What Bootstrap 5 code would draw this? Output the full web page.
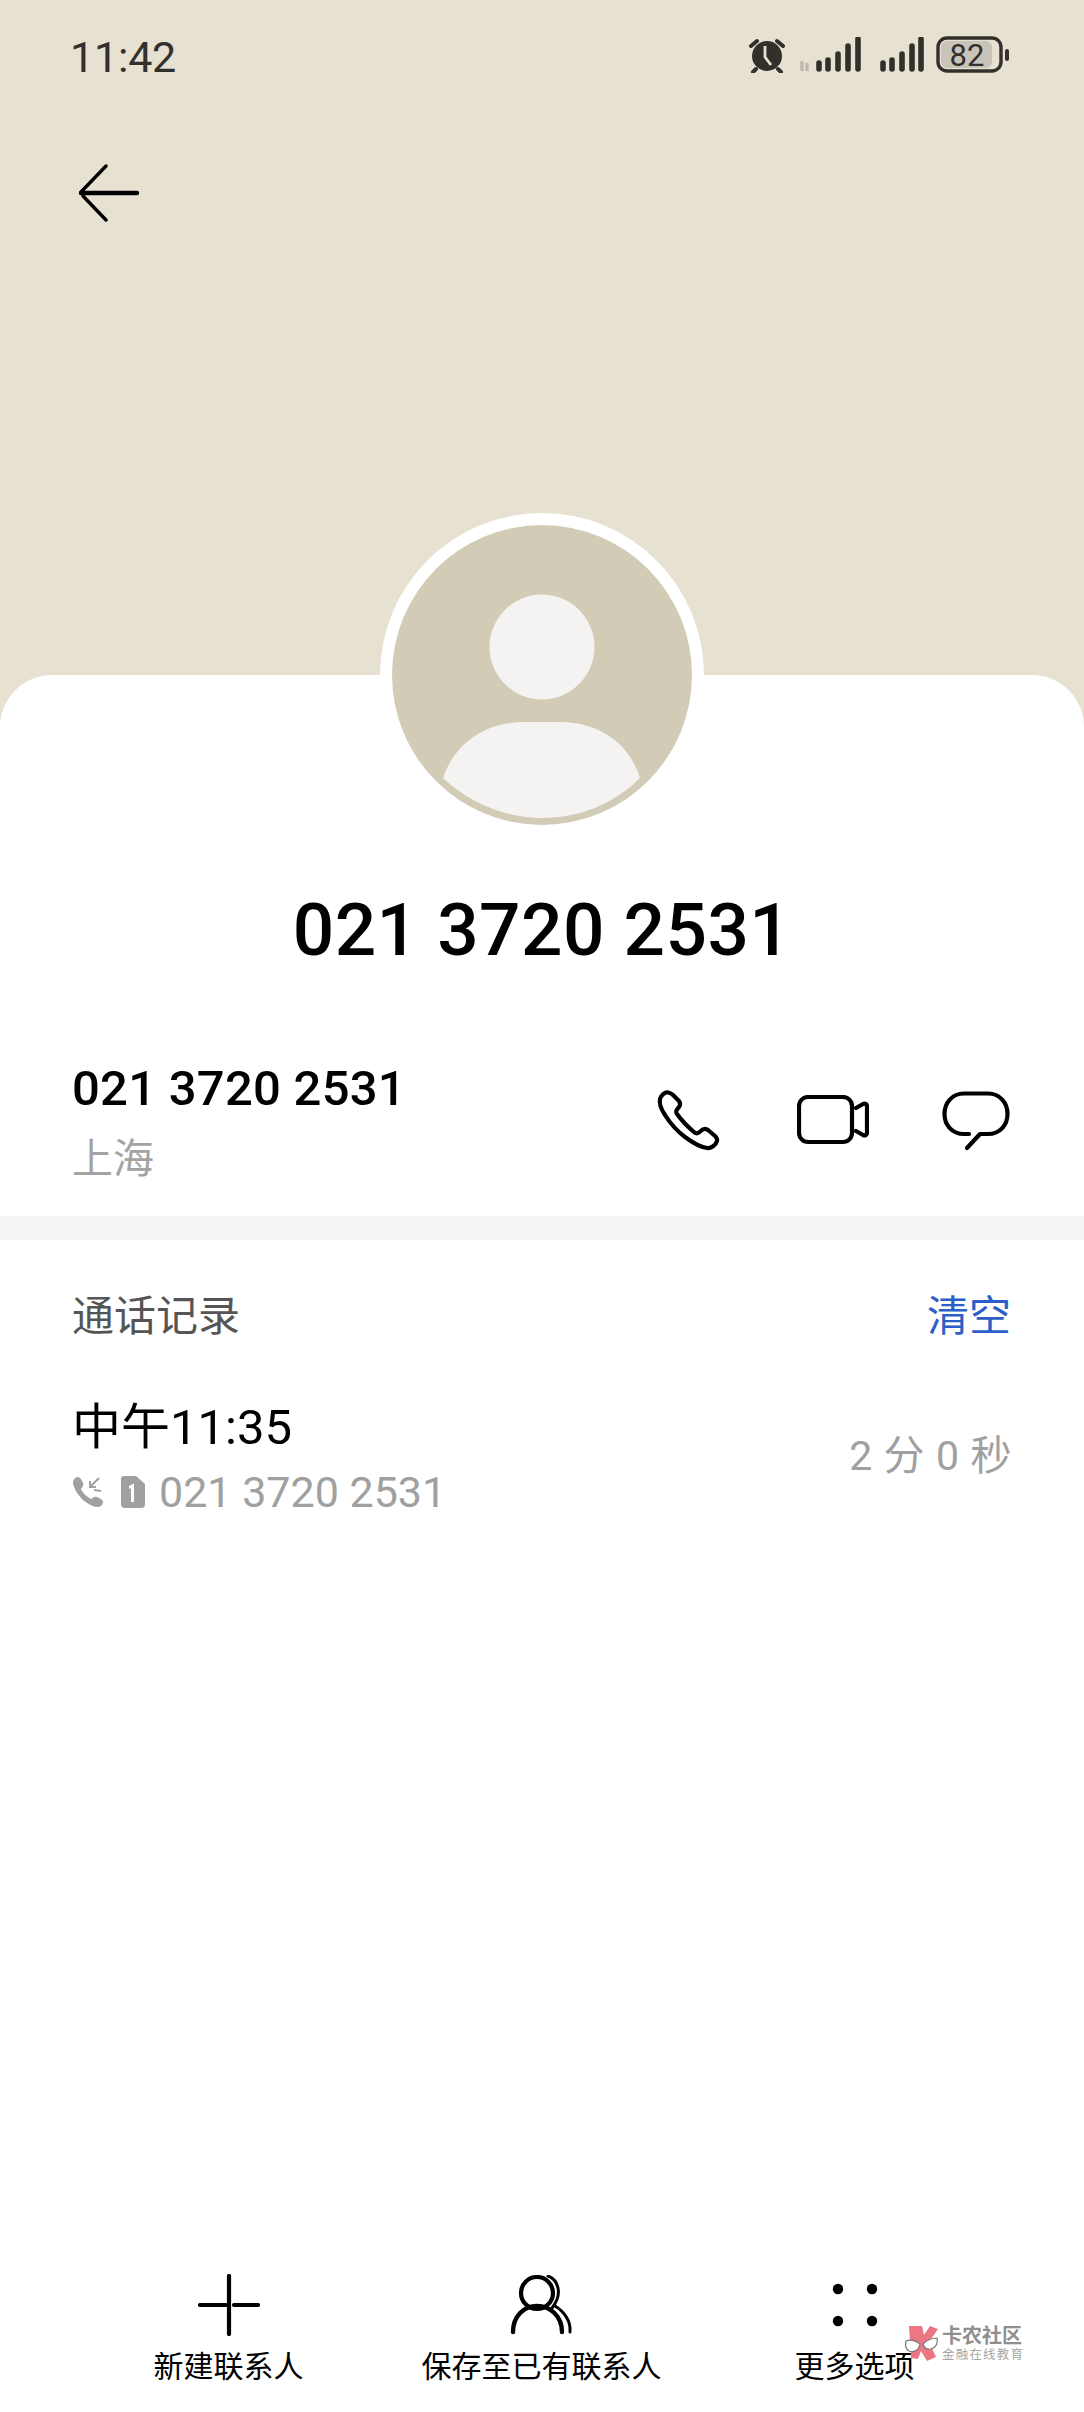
<!DOCTYPE html>
<html lang="zh">
<head>
  <meta charset="UTF-8">
  <title>通话详情</title>
  <link rel="stylesheet" href="https://cdn.jsdelivr.net/npm/bootstrap@5.3.3/dist/css/bootstrap.min.css">
  <style>
    body { background: #fff; font-family: Roboto, "Noto Sans CJK SC", sans-serif; color: #000; }
    svg { display: block; }
    .page { width: 1084px; height: 2412px; background: #e6e1d1; position: relative; overflow: hidden; }
    .top-area { height: 675px; }
    .status-bar { padding: 36px 74px 0 70px; height: 114px; color: #33302b; }
    .clock { font-size: 43px; line-height: 42px; letter-spacing: -.2px; }
    .sig-gap { margin-left: 13px; }
    .back-btn { margin: 50px 0 0 78px; }
    .sheet { background: #fff; border-radius: 52px 52px 0 0; height: 1737px; }
    .avatar-ring { position: absolute; left: 380px; top: 513px; width: 324px; height: 324px; }
    .big-num { padding-top: 214px; font-size: 73px; line-height: 82px; font-weight: 500; letter-spacing: .45px; }
    .num-row { padding: 90px 72px 0; height: 245px; }
    .num-main { font-size: 49px; line-height: 56px; font-weight: 500; letter-spacing: .25px; }
    .num-loc { font-size: 41px; line-height: 56px; color: #a3a3a3; margin-top: 14px; }
    .num-actions { padding-top: 28px; margin-right: 2px; }
    .band { height: 24px; background: #f5f5f5; }
    .log-head { padding: 50px 73px 0 72px; height: 108px; font-size: 42px; line-height: 54px; }
    .log-title { color: #555; }
    .log-clear { color: #2b5fc7; }
    .log-row { padding: 52px 72px 0 72px; }
    .log-time { font-size: 49px; line-height: 56px; }
    .log-sub { font-size: 43px; line-height: 50px; color: #a0a0a0; margin-top: 11px; gap: 14px; }
    .log-len { font-size: 41px; color: #a0a0a0; margin-top: 26px; letter-spacing: .6px; }
    .tool-bar { position: absolute; left: 0; right: 0; top: 2270px; padding: 0 72px; }
    .tool-item { width: 313px; font-size: 30px; line-height: 40px; }
    .tool-icon { height: 70px; margin-bottom: 7px; }
    .wm { position: absolute; left: 903px; top: 2324px; color: #8f8f8f; }
    .wm-a { font-size: 20px; line-height: 24px; font-weight: 700; }
    .wm-b { font-size: 12.5px; line-height: 14px; letter-spacing: 1.2px; color: #a5a5a5; }
  </style>
</head>
<body class="m-0">
<div class="page">
  <div class="top-area">
    <div class="status-bar d-flex justify-content-between align-items-start">
      <div class="clock">11:42</div>
      <div class="d-flex align-items-center">
        <svg width="38" height="36" viewBox="0 0 38 36">
          <circle cx="19" cy="19" r="15" fill="#33302b"/>
          <path d="M3 9 9 4M35 9 29 4M8 32 5 35M30 32 33 35" stroke="#33302b" stroke-width="4" stroke-linecap="round"/>
          <path d="M17 9v11l6 8" fill="none" stroke="#e6e1d1" stroke-width="2.800"/>
        </svg>
        <svg class="sig-gap" width="62" height="36" viewBox="0 0 62 36">
          <path d="M3 34V24M8 34V26" stroke="#bdb9ae" stroke-width="3.400"/>
          <path d="M20 32v-6M29 32V23M39 32V17M49 32V9M59 32V2" stroke="#33302b" stroke-width="5.600" stroke-linecap="round"/>
        </svg>
        <svg style="margin-left:19px" width="44" height="36" viewBox="0 0 44 36">
          <path d="M3 32v-6M12 32V23M22 32V17M32 32V9M41 32V2" stroke="#33302b" stroke-width="5.600" stroke-linecap="round"/>
        </svg>
        <svg style="margin-left:12px" width="74" height="38" viewBox="0 0 74 38">
          <rect x="2" y="2" width="63" height="33" rx="9" fill="none" stroke="#33302b" stroke-width="3.400"/>
          <rect x="5" y="5" width="51" height="27" rx="6" fill="#c8c4ba"/>
          <text x="31" y="30" text-anchor="middle" font-family="Roboto, sans-serif" font-size="31" fill="#33302b">82</text>
          <rect x="69" y="13" width="4" height="12" rx="2" fill="#33302b"/>
        </svg>
      </div>
    </div>
    <div class="back-btn">
      <svg width="62" height="58" viewBox="0 0 62 58">
        <path d="M28 2 3 28" fill="none" stroke="#000" stroke-width="3.400" stroke-linecap="round"/>
        <path d="M28 56 5 32" fill="none" stroke="#000" stroke-width="3.400" stroke-linecap="round"/>
        <path d="M3 29H59" fill="none" stroke="#000" stroke-width="4.400" stroke-linecap="round"/>
      </svg>
    </div>
  </div>

  <div class="sheet">
    <div class="big-num text-center">021 3720 2531</div>

    <div class="num-row d-flex justify-content-between">
      <div>
        <div class="num-main">021 3720 2531</div>
        <div class="num-loc">上海</div>
      </div>
      <div class="num-actions d-flex align-items-start">
        <svg width="64" height="64" viewBox="0 0 64 64" style="margin-right:77px">
          <path d="M12 3.500c-3-.8-7 3-8 6.500-1 5 1 10 5 16 5 8 12 16 20 22 8 6 15 10 22 11 4 .6 9-3 10-7 .5-2 0-3-2-5l-7-6c-2-1.600-4-1.500-6 0l-3 2.500c-1.500 1-3 1-4.500 0C32 38 26 32 21 25c-1-1.500-1-3 0-4.500l2-2.500c1.500-2 1.500-4 0-6l-6-6c-1.500-1.500-3-2-5-2.500z" fill="none" stroke="#000" stroke-width="4.200" stroke-linejoin="round"/>
        </svg>
        <svg width="72" height="50" viewBox="0 0 72 50" style="margin:6px 73px 0 0">
          <rect x="2" y="2" width="53" height="45" rx="9" fill="none" stroke="#000" stroke-width="4.200"/>
          <path d="M59 13 66 9c2-1 4 0 4 2.500v26c0 2.500-2 3.500-4 2.500L59 36" fill="none" stroke="#000" stroke-width="4.200" stroke-linejoin="round" stroke-linecap="round"/>
        </svg>
        <svg width="68" height="60" viewBox="0 0 68 60" style="margin-top:2px">
          <path d="M27 43H22C10 43 2.500 34 2.500 23S10 2.500 22 2.500H46C58 2.500 65.500 12 65.500 23S58 43 46 43H38L25 57" fill="none" stroke="#000" stroke-width="4.200" stroke-linecap="round" stroke-linejoin="round"/>
        </svg>
      </div>
    </div>

    <div class="band"></div>

    <div class="log-head d-flex justify-content-between">
      <span class="log-title">通话记录</span>
      <span class="log-clear">清空</span>
    </div>

    <div class="log-row d-flex justify-content-between align-items-start">
      <div>
        <div class="log-time">中午11:35</div>
        <div class="log-sub d-flex align-items-center">
          <span class="d-flex align-items-center" style="gap:17px">
            <svg width="32" height="32" viewBox="0 0 32 32">
              <path d="M6 1C3 1 1 4 1 7c1 6 5 12 10 17 5 4 10 7 15 7 3 0 5-3 5-5 0-1-1-2-2-3l-4-2c-1-.5-3-.5-4 .5l-2 1.500C15 21 10 16 9 13l2-3c.7-1 .7-2 0-3L9 3C8 2 7 1 6 1z" fill="#a0a0a0"/>
              <path d="M27 2 18 11M18 5v6h6M22 14l7 1" fill="none" stroke="#a0a0a0" stroke-width="2"/>
            </svg>
            <svg width="24" height="32" viewBox="0 0 24 32">
              <path d="M3 0H15L24 8V28a4 4 0 0 1-4 4H4a4 4 0 0 1-4-4V3a3 3 0 0 1 3-3z" fill="#a0a0a0"/>
              <path d="M8 10 13 7.500V26H10V12L8 13z" fill="#fff"/>
            </svg>
          </span>
          <span>021 3720 2531</span>
        </div>
      </div>
      <div class="log-len">2 分 0 秒</div>
    </div>
  </div>

  <!-- avatar sits across the sheet edge -->
  <svg class="avatar-ring" viewBox="0 0 324 324">
    <circle cx="162" cy="162" r="162" fill="#fff"/>
    <circle cx="162" cy="162" r="150" fill="#d2ccb7"/>
    <circle cx="162" cy="134" r="52.500" fill="#f4f3f1"/>
    <path d="M63 265C75 230 105 209 145 209H179C219 209 249 230 260 265 235 290 200 305 162 305 125 305 90 290 63 265z" fill="#f4f3f1"/>
  </svg>

  <div class="tool-bar d-flex">
    <div class="tool-item text-center">
      <div class="tool-icon d-flex justify-content-center align-items-center">
        <svg width="62" height="62" viewBox="0 0 62 62">
          <path d="M31 2V60M2 31H28M36 31H60" stroke="#000" stroke-width="4.200" stroke-linecap="round"/>
        </svg>
      </div>
      <div>新建联系人</div>
    </div>
    <div class="tool-item text-center">
      <div class="tool-icon d-flex justify-content-center align-items-center">
        <svg width="64" height="60" viewBox="0 0 64 60">
          <circle cx="27" cy="18" r="16" fill="none" stroke="#000" stroke-width="4.200"/>
          <path d="M3 57C3 41 14 31 27 31S52 41 52 57" fill="none" stroke="#000" stroke-width="4.400" stroke-linecap="round"/>
          <path d="M38 1C47 4 54 18 42 33" fill="none" stroke="#000" stroke-width="3" stroke-linecap="round"/>
          <path d="M45 31C55 37 61 47 60 57" fill="none" stroke="#000" stroke-width="3" stroke-linecap="round"/>
        </svg>
      </div>
      <div>保存至已有联系人</div>
    </div>
    <div class="tool-item text-center">
      <div class="tool-icon d-flex justify-content-center align-items-center">
        <svg width="46" height="44" viewBox="0 0 46 44">
          <circle cx="6" cy="6" r="5.200"/><circle cx="40" cy="6" r="5.200"/>
          <circle cx="6" cy="38" r="5.200"/><circle cx="40" cy="38" r="5.200"/>
        </svg>
      </div>
      <div>更多选项</div>
    </div>
  </div>

  <!-- forum watermark over the toolbar -->
  <div class="wm d-flex align-items-center" style="gap:4px">
    <svg width="35" height="38" viewBox="0 0 35 38">
      <path d="M6 2H19L21 11 27 2 35 5 26 18 33 33 24 37 18 27 15 35 8 34z" fill="#ec7683"/>
      <path d="M3 17C8 15 13 17 17 20 16 26 11 29 6 27 3 25 2 21 3 17zM20 20C24 16 29 14 34 14 35 19 33 24 28 25 24 26 21 24 20 20z" fill="#fff" stroke="#777" stroke-width="1.200"/>
    </svg>
    <div>
      <div class="wm-a">卡农社区</div>
      <div class="wm-b">金融在线教育</div>
    </div>
  </div>
</div>
<script src="https://cdn.jsdelivr.net/npm/bootstrap@5.3.3/dist/js/bootstrap.bundle.min.js"></script>
</body>
</html>
